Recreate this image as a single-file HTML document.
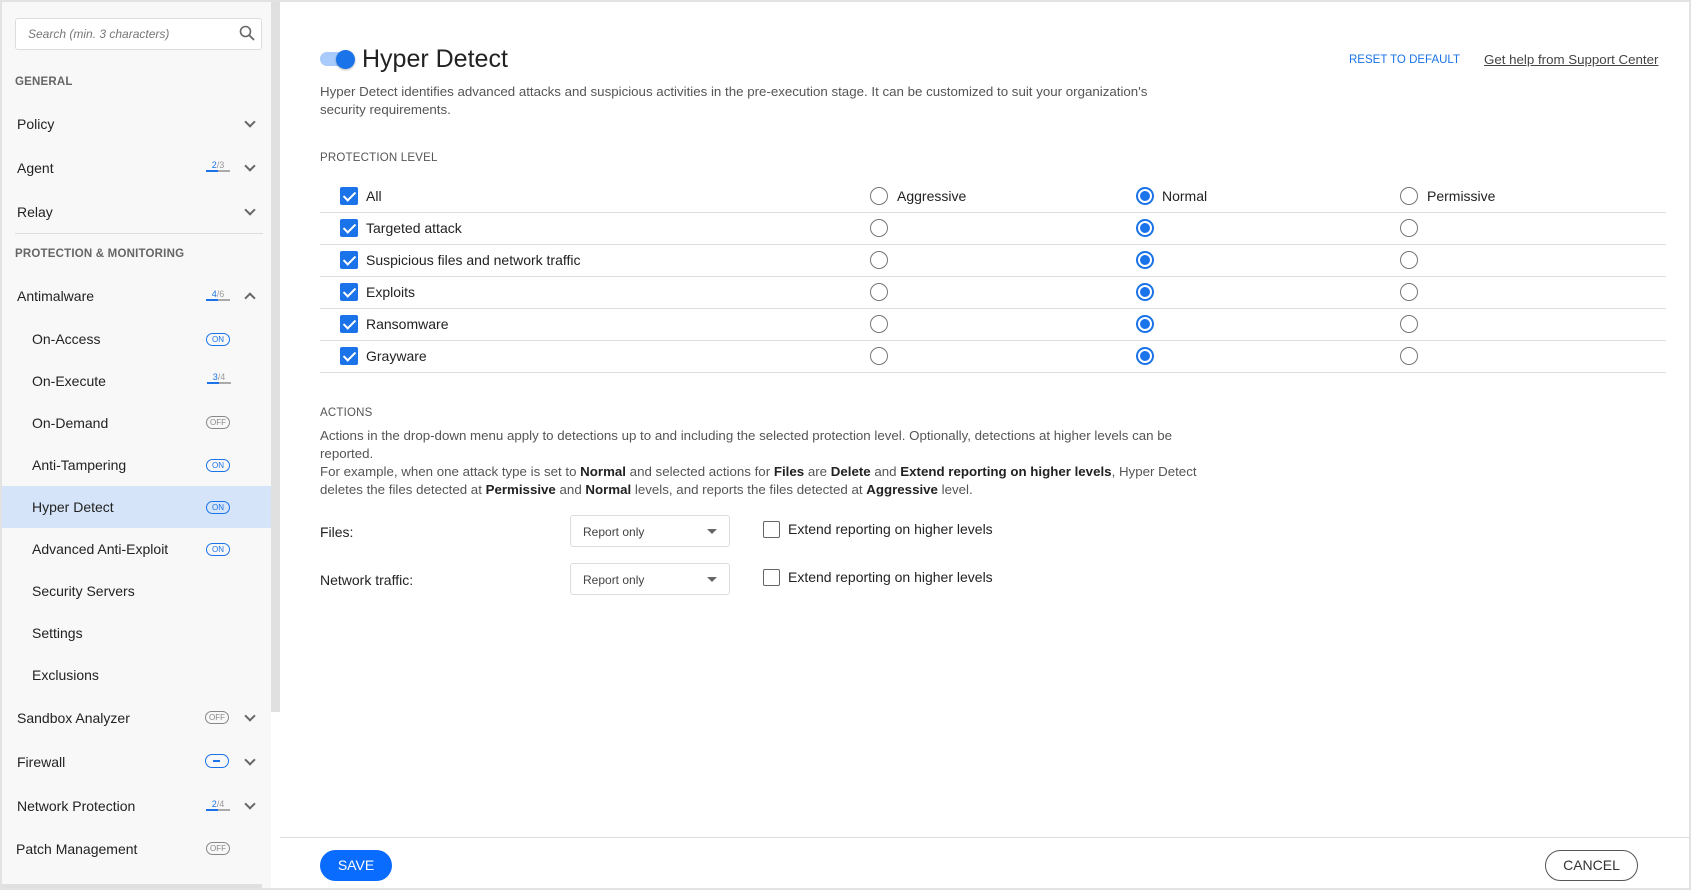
<!DOCTYPE html>
<html><head><meta charset="utf-8"><style>
*{box-sizing:border-box;margin:0;padding:0}
body{width:1691px;height:890px;overflow:hidden;background:#fff;font-family:"Liberation Sans",sans-serif;color:#222;position:relative}
.a{position:absolute;white-space:nowrap}
#frame{position:absolute;left:0;top:0;width:1691px;height:890px;border:2px solid #e2e2e2;border-left-width:2px}
#side{position:absolute;left:2px;top:2px;width:269px;height:886px;background:#f8f8f8}
#scroll{position:absolute;left:271px;top:2px;width:9px;height:710px;background:#e0e0e0}
.sec{font-size:11.5px;color:#666;font-weight:bold;letter-spacing:.2px}
.it{font-size:14px;color:#222}
.badge{position:absolute;width:24px;height:13px;border:1.3px solid #1a73e8;border-radius:7px;font-size:8px;color:#1a73e8;text-align:center;line-height:11px}
.badge.off{border-color:#888;color:#888}
.frac{position:absolute;font-size:9px;color:#999;width:24px;text-align:center;border-bottom:2px solid #aaa;line-height:10px}
.frac b{color:#1a73e8;font-weight:normal}
.frac i{position:absolute;left:0;bottom:-2px;width:12px;height:2px;background:#1a73e8}
.chev{position:absolute;width:8px;height:8px;border-right:2px solid #666;border-bottom:2px solid #666;transform:rotate(45deg)}
.chev.up{transform:rotate(-135deg)}
.cb{position:absolute;width:18px;height:18px;background:#1a73e8;border-radius:2px}
.cb:after{content:"";position:absolute;left:6px;top:2px;width:5px;height:10px;border-right:2px solid #fff;border-bottom:2px solid #fff;transform:rotate(45deg)}
.cbe{position:absolute;width:17px;height:17px;border:1.5px solid #666;border-radius:2px;background:#fff}
.r{position:absolute;width:18px;height:18px;border:1.8px solid #777;border-radius:50%}
.r.on{border:2px solid #1a73e8}
.r.on:after{content:"";position:absolute;left:2px;top:2px;width:10px;height:10px;border-radius:50%;background:#1a73e8}
.line{position:absolute;left:320px;width:1346px;height:1px;background:#ddd}
.lbl{font-size:14px;color:#222}
.p{font-size:13.3px;color:#555}
.p b{color:#222}
.dd{position:absolute;width:160px;height:32px;border:1px solid #ddd;border-radius:3px;font-size:12px;color:#444;padding:9px 12px}
.dd:after{content:"";position:absolute;right:12px;top:13px;border:5px solid transparent;border-top:5px solid #666}
</style></head><body>
<div id="frame"></div>
<div id="side"></div>
<div id="scroll"></div>
<div class="a" style="left:15px;top:18px;width:247px;height:32px;background:#fff;border:1px solid #ddd;border-radius:3px"></div>
<div class="a" style="left:28px;top:27px;font-size:12px;color:#777;font-style:italic">Search (min. 3 characters)</div>
<svg class="a" style="left:239px;top:25px" width="16" height="16" viewBox="0 0 16 16"><circle cx="6.5" cy="6.5" r="5" fill="none" stroke="#666" stroke-width="1.6"/><path d="M10.3 10.3L15 15" stroke="#666" stroke-width="1.8"/></svg>
<div class="a sec" style="left:15px;top:76px">GENERAL</div>
<div class="a it" style="left:17px;top:116px">Policy</div><div class="chev" style="left:246px;top:118px"></div>
<div class="a it" style="left:17px;top:160px">Agent</div><div class="frac" style="left:206px;top:160px"><b>2</b>/3<i></i></div><div class="chev" style="left:246px;top:162px"></div>
<div class="a it" style="left:17px;top:204px">Relay</div><div class="chev" style="left:246px;top:206px"></div>
<div class="a" style="left:15px;top:233px;width:248px;height:1px;background:#ddd"></div>
<div class="a sec" style="left:15px;top:248px">PROTECTION &amp; MONITORING</div>
<div class="a it" style="left:17px;top:288px">Antimalware</div><div class="frac" style="left:206px;top:289px"><b>4</b>/6<i></i></div><div class="chev up" style="left:246px;top:294px"></div>
<div class="a it" style="left:32px;top:331px">On-Access</div><div class="badge" style="left:206px;top:333px">ON</div>
<div class="a it" style="left:32px;top:373px">On-Execute</div><div class="frac" style="left:207px;top:372px"><b>3</b>/4<i></i></div>
<div class="a it" style="left:32px;top:415px">On-Demand</div><div class="badge off" style="left:206px;top:416px">OFF</div>
<div class="a it" style="left:32px;top:457px">Anti-Tampering</div><div class="badge" style="left:206px;top:459px">ON</div>
<div class="a" style="left:2px;top:486px;width:269px;height:42px;background:#d5e4f8"></div>
<div class="a it" style="left:32px;top:499px">Hyper Detect</div><div class="badge" style="left:206px;top:501px">ON</div>
<div class="a it" style="left:32px;top:541px">Advanced Anti-Exploit</div><div class="badge" style="left:206px;top:543px">ON</div>
<div class="a it" style="left:32px;top:583px">Security Servers</div>
<div class="a it" style="left:32px;top:625px">Settings</div>
<div class="a it" style="left:32px;top:667px">Exclusions</div>
<div class="a it" style="left:17px;top:710px">Sandbox Analyzer</div><div class="badge off" style="left:205px;top:711px">OFF</div><div class="chev" style="left:246px;top:712px"></div>
<div class="a it" style="left:17px;top:754px">Firewall</div><div class="a" style="left:205px;top:754px;width:24px;height:14px;border:1.6px solid #1a73e8;border-radius:7px"><div style="position:absolute;left:7px;top:5px;width:7px;height:1.6px;background:#1a73e8"></div></div><div class="chev" style="left:246px;top:756px"></div>
<div class="a it" style="left:17px;top:798px">Network Protection</div><div class="frac" style="left:206px;top:799px"><b>2</b>/4<i></i></div><div class="chev" style="left:246px;top:800px"></div>
<div class="a it" style="left:16px;top:841px">Patch Management</div><div class="badge off" style="left:206px;top:842px">OFF</div>
<div class="a" style="left:2px;top:884px;width:260px;height:4px;background:#e0e0e0"></div>

<div class="a" style="left:320px;top:52px;width:32px;height:14px;border-radius:7px;background:#a9cbfb"></div>
<div class="a" style="left:336px;top:50px;width:19px;height:19px;border-radius:50%;background:#1a73e8;box-shadow:0 1px 2px rgba(0,0,0,.3)"></div>
<div class="a" style="left:362px;top:45px;font-size:25px;color:#222">Hyper Detect</div>
<div class="a" style="left:1349px;top:54px;font-size:11.5px;color:#1a73e8">RESET TO DEFAULT</div>
<div class="a" style="left:1484px;top:52px;font-size:13.3px;color:#444;text-decoration:underline">Get help from Support Center</div>
<div class="a p" style="left:320px;top:83px;line-height:18px">Hyper Detect identifies advanced attacks and suspicious activities in the pre-execution stage. It can be customized to suit your organization's<br>security requirements.</div>
<div class="a sec" style="left:320px;top:152px;font-weight:normal;color:#555">PROTECTION LEVEL</div>

<div class="cb" style="left:340px;top:187px"></div><div class="a lbl" style="left:366px;top:188px">All</div>
<div class="r" style="left:870px;top:187px"></div><div class="a lbl" style="left:897px;top:188px">Aggressive</div>
<div class="r on" style="left:1136px;top:187px"></div><div class="a lbl" style="left:1162px;top:188px">Normal</div>
<div class="r" style="left:1400px;top:187px"></div><div class="a lbl" style="left:1427px;top:188px">Permissive</div>
<div class="line" style="top:212px"></div>
<div class="cb" style="left:340px;top:219px"></div><div class="a lbl" style="left:366px;top:220px">Targeted attack</div>
<div class="r" style="left:870px;top:219px"></div><div class="r on" style="left:1136px;top:219px"></div><div class="r" style="left:1400px;top:219px"></div>
<div class="line" style="top:244px"></div>
<div class="cb" style="left:340px;top:251px"></div><div class="a lbl" style="left:366px;top:252px">Suspicious files and network traffic</div>
<div class="r" style="left:870px;top:251px"></div><div class="r on" style="left:1136px;top:251px"></div><div class="r" style="left:1400px;top:251px"></div>
<div class="line" style="top:276px"></div>
<div class="cb" style="left:340px;top:283px"></div><div class="a lbl" style="left:366px;top:284px">Exploits</div>
<div class="r" style="left:870px;top:283px"></div><div class="r on" style="left:1136px;top:283px"></div><div class="r" style="left:1400px;top:283px"></div>
<div class="line" style="top:308px"></div>
<div class="cb" style="left:340px;top:315px"></div><div class="a lbl" style="left:366px;top:316px">Ransomware</div>
<div class="r" style="left:870px;top:315px"></div><div class="r on" style="left:1136px;top:315px"></div><div class="r" style="left:1400px;top:315px"></div>
<div class="line" style="top:340px"></div>
<div class="cb" style="left:340px;top:347px"></div><div class="a lbl" style="left:366px;top:348px">Grayware</div>
<div class="r" style="left:870px;top:347px"></div><div class="r on" style="left:1136px;top:347px"></div><div class="r" style="left:1400px;top:347px"></div>
<div class="line" style="top:372px"></div>

<div class="a sec" style="left:320px;top:407px;font-weight:normal;color:#555">ACTIONS</div>
<div class="a p" style="left:320px;top:427px;line-height:18px">Actions in the drop-down menu apply to detections up to and including the selected protection level. Optionally, detections at higher levels can be<br>reported.<br>For example, when one attack type is set to <b>Normal</b> and selected actions for <b>Files</b> are <b>Delete</b> and <b>Extend reporting on higher levels</b>, Hyper Detect<br>deletes the files detected at <b>Permissive</b> and <b>Normal</b> levels, and reports the files detected at <b>Aggressive</b> level.</div>
<div class="a lbl" style="left:320px;top:524px">Files:</div>
<div class="dd" style="left:570px;top:515px">Report only</div>
<div class="cbe" style="left:763px;top:521px"></div><div class="a lbl" style="left:788px;top:521px">Extend reporting on higher levels</div>
<div class="a lbl" style="left:320px;top:572px">Network traffic:</div>
<div class="dd" style="left:570px;top:563px">Report only</div>
<div class="cbe" style="left:763px;top:569px"></div><div class="a lbl" style="left:788px;top:569px">Extend reporting on higher levels</div>

<div class="a" style="left:280px;top:837px;width:1409px;height:1px;background:#ddd"></div>
<div class="a" style="left:320px;top:850px;width:72px;height:31px;border-radius:16px;background:#0a6cff;color:#fff;font-size:14px;text-align:center;line-height:31px">SAVE</div>
<div class="a" style="left:1545px;top:850px;width:93px;height:31px;border-radius:16px;border:1.3px solid #555;color:#333;font-size:14px;text-align:center;line-height:29px">CANCEL</div>
</body></html>
